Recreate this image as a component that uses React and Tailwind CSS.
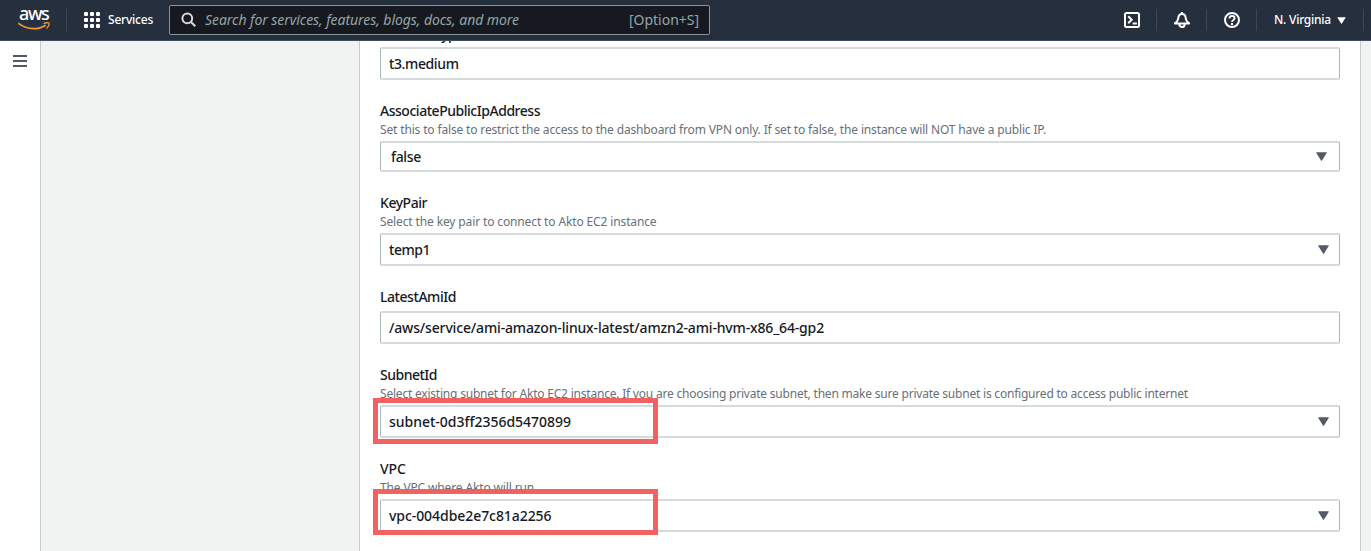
import React from "react";

const DESC = {
  ip: "Set this to false to restrict the access to the dashboard from VPN only. If set to false, the instance will NOT have a public IP.",
  subnet:
    "Select existing subnet for Akto EC2 instance. If you are choosing private subnet, then make sure private subnet is configured to access public internet",
};

const FIELDS = [
  { label: "InstanceType", labelCls: "tracking-[-0.45px] pt-[2px]", value: "t3.medium", valueCls: "tracking-[-0.385px]" },
  {
    label: "AssociatePublicIpAddress",
    labelCls: "tracking-[-0.47px]",
    desc: DESC.ip,
    descCls: "tracking-[-0.152px]",
    value: "false",
    valueCls: "tracking-[-0.325px]",
    select: true,
    compact: true,
  },
  {
    label: "KeyPair",
    labelCls: "tracking-[-0.464px]",
    desc: "Select the key pair to connect to Akto EC2 instance",
    descCls: "tracking-[-0.129px]",
    value: "temp1",
    valueCls: "tracking-[-0.469px]",
    select: true,
  },
  {
    label: "LatestAmiId",
    labelCls: "tracking-[-0.445px]",
    value: "/aws/service/ami-amazon-linux-latest/amzn2-ami-hvm-x86_64-gp2",
    valueCls: "tracking-[-0.158px]",
  },
  {
    label: "SubnetId",
    labelCls: "tracking-[-0.496px]",
    desc: DESC.subnet,
    descCls: "tracking-[-0.209px]",
    value: "subnet-0d3ff2356d5470899",
    valueCls: "tracking-[-0.016px]",
    select: true,
    highlight: "-top-[7px]",
  },
  {
    label: "VPC",
    labelCls: "tracking-[-0.013px]",
    desc: "The VPC where Akto will run",
    descCls: "tracking-[-0.14px]",
    value: "vpc-004dbe2e7c81a2256",
    valueCls: "tracking-[-0.063px]",
    select: true,
    highlight: "-top-[10px]",
  },
];

function Caret({ className }) {
  return (
    <svg viewBox="0 0 11 9" className={className} aria-hidden="true">
      <path d="M.6.3h9.800a.4.4 0 0 1 .3.600L6 8.500a.6.6 0 0 1-1 0L.3.900A.4.4 0 0 1 .6.3z" fill="currentColor" />
    </svg>
  );
}

function Field({ f }) {
  return (
    <div>
      <div className={`h-[18px] whitespace-nowrap text-[14px] font-medium leading-[18px] text-[#16191f] ${f.labelCls}`}>
        {f.label}
      </div>
      {f.desc ? (
        <div className={`mb-[2px] mt-px h-[18px] whitespace-nowrap text-[12px] leading-[18px] text-[#687078] ${f.descCls}`}>
          {f.desc}
        </div>
      ) : (
        <div className="h-[5px]" />
      )}
      <div className="relative">
        <div
          className={`flex items-center justify-between rounded-[2px] border-x border-y-2 border-x-[#aab7b8] border-y-[#d5dbdb] bg-white ${
            f.compact ? "h-[31px] pl-[10px] pr-[12px]" : "h-[33px] pl-2 pr-[10px]"
          }`}
        >
          <span
            className={`whitespace-nowrap text-[14px] font-medium leading-[20px] text-[#16191f] ${f.valueCls}`}
          >
            {f.value}
          </span>
          {f.select && <Caret className="h-[9px] w-[11px] text-[#545b64]" />}
        </div>
        {f.highlight && (
          <div className={`absolute -left-[7px] h-[46px] w-[285px] border-[5px] border-[#f25a5a]/95 ${f.highlight}`} />
        )}
      </div>
    </div>
  );
}

function Divider() {
  return <div className="h-[22px] w-px shrink-0 bg-[#414750]" />;
}

function IconCell({ children }) {
  return <div className="flex w-[49px] items-center justify-center">{children}</div>;
}

const stroke = { fill: "none", stroke: "currentColor", strokeWidth: 2, strokeLinejoin: "round" };

function Header() {
  return (
    <header className="flex h-[41px] shrink-0 items-center border-b border-[#414d5c] bg-[#262f3e] text-white">
      <div className="flex h-[24px] w-[66px] shrink-0 flex-col pl-[18px]">
        <div className="-mt-[3px] h-[17px] pl-px text-[18px] font-medium leading-[17px] tracking-[-1.400px]">aws</div>
        <svg viewBox="0 0 32 9" className="h-[9px] w-8" aria-hidden="true">
          <path d="M.2 1.200c4.500 3.600 9.700 5.500 15.300 5.500 4.300 0 8.700-1.300 12.200-3.500" fill="none" stroke="#f79a2b" strokeWidth="1.700" />
          <path d="M26 1.500c1.700-.9 4.300-1 4.800-.4.500.900-.4 3.400-1.900 5" fill="none" stroke="#f79a2b" strokeWidth="1.300" strokeLinecap="round" />
        </svg>
      </div>
      <Divider />
      <div className="ml-[17px] grid w-4 grid-cols-3 gap-[2px]">
        {Array.from({ length: 9 }, (_, i) => (
          <span key={i} className="h-4 max-h-1 rounded-[1px] bg-white" />
        ))}
      </div>
      <span className="ml-2 w-[61px] text-[12px] font-medium leading-[18px] tracking-[-0.218px]">Services</span>
      <div className="flex h-[30px] w-[541px] items-center rounded-[2px] border border-[#879596] bg-[#16191f] pl-[11px] pr-[10px]">
        <svg viewBox="0 0 16 16" className="mr-[8px] size-4 text-[#d5dbdb]" aria-hidden="true">
          <circle cx="6.300" cy="6.300" r="4.900" {...stroke} />
          <path d="M9.700 9.700l4.600 4.600" {...stroke} />
        </svg>
        <span className="flex-1 whitespace-nowrap text-[14px] italic leading-[20px] tracking-[-0.053px] text-[#95a5a6]">
          Search for services, features, blogs, docs, and more
        </span>
        <span className="whitespace-nowrap text-[14px] leading-[20px] tracking-[-0.024px] text-[#95a5a6]">[Option+S]</span>
      </div>
      <div className="ml-auto flex items-center pr-[7px]">
        <IconCell>
          <svg viewBox="0 0 16 16" className="size-4" aria-hidden="true">
            <rect x="1" y="1" width="14" height="14" rx="1.500" {...stroke} />
            <path d="M4.200 4.300l3.500 3.500-3.500 3.500M8.700 11.500h4.200" {...stroke} strokeLinejoin="miter" />
          </svg>
        </IconCell>
        <Divider />
        <IconCell>
          <svg viewBox="0 0 16 16" className="size-4" aria-hidden="true">
            <path d="M8 2C5.600 2 4.500 3.900 4.300 6 4 8.800 3.300 9.800.8 11.400h14.400C12.700 9.800 12 8.800 11.700 6 11.500 3.900 10.400 2 8 2z" {...stroke} />
            <path d="M8 0v2" {...stroke} />
            <path d="M5.400 11.500v.9a2.600 2.600 0 0 0 5.200 0v-.9" {...stroke} />
          </svg>
        </IconCell>
        <Divider />
        <IconCell>
          <svg viewBox="0 0 16 16" className="size-4" aria-hidden="true">
            <circle cx="8" cy="8" r="7" {...stroke} />
            <path d="M5.400 6.600C5.400 4.900 6.500 4 8 4s2.600.9 2.600 2.300C10.600 8 8 8.100 8 10" {...stroke} strokeWidth={1.8} />
            <path d="M8 11v1.900" {...stroke} />
          </svg>
        </IconCell>
        <Divider />
        <div className="flex w-[106px] items-center pl-[17px]">
          <span className="w-[63px] whitespace-nowrap text-[12px] font-medium leading-[18px] tracking-[-0.235px]">N. Virginia</span>
          <Caret className="h-[7px] w-[9px]" />
        </div>
        <Divider />
      </div>
    </header>
  );
}

export default function App() {
  return (
    <div className="flex h-[551px] w-[1371px] flex-col overflow-hidden font-['Noto_Sans',sans-serif]">
      <Header />
      <div className="flex min-h-0 flex-1 bg-[#f1f3f3]">
        <nav className="w-[41px] shrink-0 border-r border-[#c6cccc] bg-white pl-[13px] pt-[14px]">
          <div className="flex w-[14px] flex-col gap-[3px]">
            <span className="h-[2px] bg-[#545b64]" />
            <span className="h-[2px] bg-[#545b64]" />
            <span className="h-[2px] bg-[#545b64]" />
          </div>
        </nav>
        <div className="w-[318px] shrink-0" />
        <main className="w-[1002px] shrink-0 overflow-hidden border-x border-[#c6cccc] bg-white pl-5">
          <div className="-mt-[17px] flex w-[960px] flex-col gap-[22px]">
            {FIELDS.map((f) => (
              <Field key={f.label} f={f} />
            ))}
          </div>
        </main>
      </div>
    </div>
  );
}
